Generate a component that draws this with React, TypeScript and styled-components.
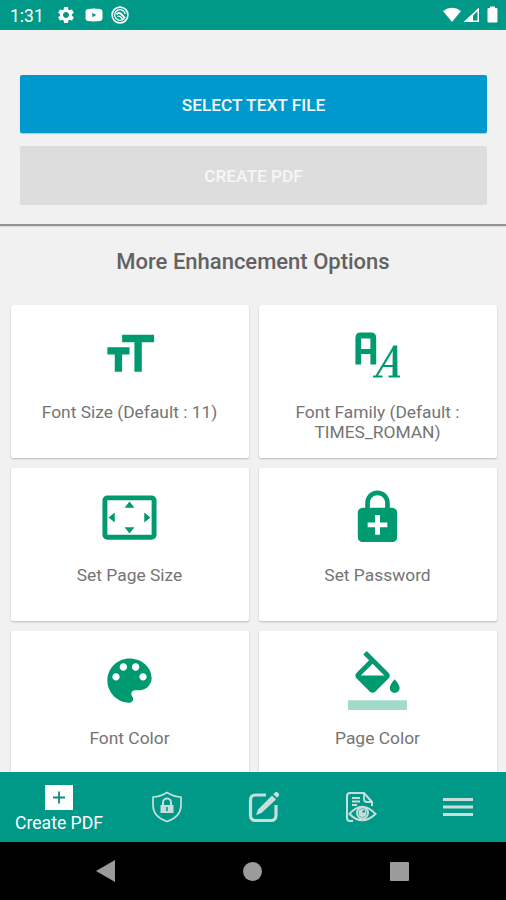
import React from "react";
import styled, { createGlobalStyle } from "styled-components";

const GlobalStyle = createGlobalStyle`
  * { box-sizing: border-box; }
  body { margin: 0; font-family: Roboto, "Liberation Sans", sans-serif; }
  svg { display: block; }
`;

const Screen = styled.div`
  width: 506px;
  height: 900px;
  display: flex;
  flex-direction: column;
  overflow: hidden;
  background: #f1f1f1;
`;

const StatusBar = styled.header`
  flex: 0 0 30px;
  min-height: 0;
  display: flex;
  align-items: center;
  padding: 0 8px 0 10px;
  background: #009887;
  color: #fff;
`;

const Clock = styled.span`
  width: 46px;
  font-size: 17.5px;
  line-height: 28px;
  padding-top: 2px;
`;

const StatusGroup = styled.div<{ $gap: number; $end?: boolean }>`
  display: flex;
  align-items: center;
  gap: ${(p) => p.$gap}px;
  margin-left: ${(p) => (p.$end ? "auto" : "0")};
`;

const Actions = styled.section`
  flex: 0 0 196px;
  display: flex;
  flex-direction: column;
  gap: 13px;
  padding: 44.5px 19px 0 20px;
  border-bottom: 2px solid #929492;
  box-shadow: 0 1px 1px #dcdcdc;
`;

const ActionButton = styled.button<{ $muted?: boolean }>`
  height: 58.5px;
  padding: 2px 0 0;
  border: 0;
  border-radius: 2px;
  background: ${(p) => (p.$muted ? "#dddddd" : "#0099ce")};
  color: ${(p) => (p.$muted ? "#f6f6f6" : "#f4fbfe")};
  box-shadow: ${(p) => (p.$muted ? "none" : "0 1px 1px #a9c8d5")};
  font: 500 17.3px Roboto, sans-serif;
`;

const Heading = styled.h2`
  flex: 0 0 79px;
  margin: 0;
  padding-top: 24px;
  text-align: center;
  color: #626262;
  font-size: 22px;
  font-weight: 500;
  line-height: 24px;
`;

const Options = styled.main`
  flex: 1 1 0;
  min-height: 0;
  overflow: hidden;
  display: grid;
  grid-template-columns: 238px 238px;
  grid-auto-rows: 153px;
  gap: 10px;
  padding: 0 10px 0 10.5px;
`;

const Card = styled.article`
  display: flex;
  flex-direction: column;
  align-items: center;
  padding-top: 20px;
  background: #fff;
  border-radius: 2px;
  box-shadow: 0 1px 2px rgba(0, 0, 0, 0.23);
  color: #009a70;
`;

const CardLabel = styled.p`
  margin: 17.500px 0 0;
  width: 190px;
  text-align: center;
  color: #747474;
  font-size: 17.4px;
  line-height: 20.5px;
  white-space: pre-line;
`;

const TabBar = styled.nav`
  flex: 0 0 70px;
  display: grid;
  grid-template-columns: 118px 98px 96px 98px 96px;
  background: #009887;
  color: #c9dedb;
`;

const Tab = styled.div<{ $active?: boolean }>`
  display: flex;
  flex-direction: column;
  align-items: center;
  justify-content: ${(p) => (p.$active ? "flex-start" : "center")};
  padding-top: ${(p) => (p.$active ? 12.5 : 0)}px;
  color: ${(p) => (p.$active ? "#fff" : "inherit")};
`;

const TabLabel = styled.span`
  margin-top: 3.500px;
  font-size: 17.6px;
  line-height: 21px;
`;

const SystemBar = styled.footer`
  flex: 0 0 58px;
  display: flex;
  align-items: center;
  justify-content: space-between;
  padding: 0 97px 0 96px;
  background: #000;
  color: #9b9b9b;
`;

const MaterialIcon = ({ d, size = 59, children }: { d: string; size?: number; children?: React.ReactNode }) => (
  <svg width={size} height={size} viewBox="0 0 24 24" fill="currentColor">
    <path d={d} />
    {children}
  </svg>
);

const FontFamilyIcon = () => (
  <svg width="59" height="59" viewBox="0 0 59 59" fill="none" stroke="currentColor">
    <path d="M10.300 39.500V13q0-2.500 2.500-2.500h10q2.500 0 2.500 2.500v26.500" strokeWidth="5.800" />
    <path d="M11 26.500h14" strokeWidth="5" />
    <path d="M25 51.500h9.500M40.500 51.500h11.500" strokeWidth="2.200" />
    <path d="M28.500 51 46 22M34.500 41h12" strokeWidth="2.200" />
    <path d="M44.800 20.500h4.400L49.500 51.500h-5l.2-25z" fill="currentColor" stroke="none" />
  </svg>
);

const icons = {
  size: "M9 4v3h5v12h3V7h5V4H9zm-6 8h3v7h3v-7h3V9H3v3z",
  page: "M12.01 5.5L10 8h4l-1.99-2.5zM18 10v4l2.5-1.99L18 10zM6 10l-2.5 2.01L6 14v-4zm8 6h-4l2.01 2.5L14 16zm7-13H3c-1.1 0-2 .9-2 2v14c0 1.1.9 2 2 2h18c1.1 0 2-.9 2-2V5c0-1.1-.9-2-2-2zm0 16.01H3V4.99h18v14.02z",
  lock: "M18 8h-1V6c0-2.76-2.24-5-5-5S7 3.24 7 6v2H6c-1.1 0-2 .9-2 2v10c0 1.1.9 2 2 2h12c1.1 0 2-.9 2-2V10c0-1.1-.9-2-2-2zM8.900 6c0-1.71 1.39-3.1 3.1-3.1s3.1 1.39 3.1 3.1v2H8.900V6zM16 16h-3v3h-2v-3H8v-2h3v-3h2v3h3v2z",
  palette: "M12 3c-4.97 0-9 4.03-9 9s4.03 9 9 9c.83 0 1.5-.67 1.5-1.5 0-.39-.15-.74-.39-1.01-.23-.26-.38-.61-.38-.99 0-.83.67-1.5 1.5-1.5H16c2.76 0 5-2.24 5-5 0-4.42-4.03-8-9-8zm-5.5 9c-.83 0-1.5-.67-1.5-1.5S5.67 9 6.5 9 8 9.67 8 10.5 7.33 12 6.5 12zm3-4C8.67 8 8 7.33 8 6.5S8.67 5 9.5 5s1.5.67 1.5 1.5S10.33 8 9.5 8zm5 0c-.83 0-1.5-.67-1.5-1.5S13.67 5 14.5 5s1.5.67 1.5 1.5S15.33 8 14.5 8zm3 4c-.83 0-1.5-.67-1.5-1.5S16.67 9 17.5 9s1.5.67 1.5 1.5-.67 1.5-1.5 1.5z",
  fill: "M16.56 8.94L7.62 0 6.21 1.41l2.38 2.38-5.15 5.15c-.59.59-.59 1.54 0 2.12l5.5 5.5c.29.29.68.44 1.06.44s.77-.15 1.06-.44l5.5-5.5c.59-.58.59-1.53 0-2.12zM5.21 10L10 5.21 14.79 10H5.21zM19 11.5s-2 2.17-2 3.5c0 1.1.9 2 2 2s2-.9 2-2c0-1.33-2-3.5-2-3.5z",
  gear: "M19.14 12.94c.04-.3.06-.61.06-.94 0-.32-.02-.64-.07-.94l2.03-1.58c.18-.14.23-.41.12-.61l-1.92-3.32c-.12-.22-.37-.29-.59-.22l-2.39.96c-.5-.38-1.03-.7-1.62-.94l-.36-2.54c-.04-.24-.24-.41-.48-.41h-3.84c-.24 0-.43.17-.47.41l-.36 2.54c-.59.24-1.13.57-1.62.94l-2.39-.96c-.22-.08-.47 0-.59.22L2.74 8.87c-.12.21-.08.47.12.61l2.03 1.58c-.05.3-.09.63-.09.94s.02.64.07.94l-2.03 1.58c-.18.14-.23.41-.12.61l1.92 3.32c.12.22.37.29.59.22l2.39-.96c.5.38 1.03.7 1.62.94l.36 2.54c.05.24.24.41.48.41h3.84c.24 0 .44-.17.47-.41l.36-2.54c.59-.24 1.13-.56 1.62-.94l2.39.96c.22.08.47 0 .59-.22l1.92-3.32c.12-.22.07-.47-.12-.61l-2.01-1.58zM12 15.6c-1.98 0-3.6-1.62-3.6-3.6s1.62-3.6 3.6-3.6 3.6 1.62 3.6 3.6-1.62 3.6-3.6 3.6z",
};

const options = [
  { label: "Font Size (Default : 11)", icon: <MaterialIcon d={icons.size} /> },
  { label: "Font Family (Default :\nTIMES_ROMAN)", icon: <FontFamilyIcon /> },
  { label: "Set Page Size", icon: <MaterialIcon d={icons.page} /> },
  { label: "Set Password", icon: <MaterialIcon d={icons.lock} /> },
  { label: "Font Color", icon: <MaterialIcon d={icons.palette} /> },
  {
    label: "Page Color",
    icon: (
      <MaterialIcon d={icons.fill}>
        <path d="M0 20h24v4H0z" opacity="0.36" />
      </MaterialIcon>
    ),
  },
];

export default function App() {
  return (
    <Screen>
      <GlobalStyle />
      <StatusBar>
        <Clock>1:31</Clock>
        <StatusGroup $gap={8.5}>
          <MaterialIcon d={icons.gear} size={20} />
          <svg width="18" height="14" viewBox="0 0 18 14">
            <path d="M3 1Q9 .2 15 1q2.5.2 2.5 2.500v7q0 2.300-2.500 2.500-6 .8-12 0Q.5 12.800.5 10.500v-7Q.5 1.200 3 1zM7.300 4.800v4.400l4-2.200z" fill="#fff" fillRule="evenodd" />
          </svg>
          <svg width="18" height="18" viewBox="0 0 18 18" fill="none" stroke="#fff">
            <circle cx="9" cy="9" r="7.900" strokeWidth="1.600" />
            <path d="M13 12.500A5.300 5.300 0 1 1 14.200 8" strokeWidth="1.300" />
            <path d="M5.500 8.200Q8.500 5.200 11.500 9.500L14 12.300" strokeWidth="2" />
            <path d="M6.500 10.500Q8.500 9 11.500 13" strokeWidth="1.200" />
          </svg>
        </StatusGroup>
        <StatusGroup $gap={1} $end>
          <svg width="20" height="18" viewBox="0 0 20 18">
            <path d="M1 5Q10-1.500 19 5L10 16z" fill="#fff" />
          </svg>
          <svg width="23" height="18" viewBox="0 0 23 18">
            <path d="M16 1.500v14.500H.5zM14.500 5 10 9.800v4.700h4.500z" fill="#fff" fillRule="evenodd" />
          </svg>
          <svg width="11" height="18" viewBox="0 0 11 18">
            <path d="M3 .5h5v1.500h1.500q1 0 1 1V15.500q0 1-1 1h-8q-1 0-1-1V3q0-1 1-1H3z" fill="#fff" />
          </svg>
        </StatusGroup>
      </StatusBar>

      <Actions>
        <ActionButton>SELECT TEXT FILE</ActionButton>
        <ActionButton $muted>CREATE PDF</ActionButton>
      </Actions>

      <Heading>More Enhancement Options</Heading>

      <Options>
        {options.map((option) => (
          <Card key={option.label}>
            {option.icon}
            <CardLabel>{option.label}</CardLabel>
          </Card>
        ))}
      </Options>

      <TabBar>
        <Tab $active>
          <svg width="28" height="25" viewBox="0 0 28 25">
            <path d="M0 0h28v25H0z" fill="#fff" />
            <path d="M14 6.500v12M8 12.500h12" stroke="#16877c" strokeWidth="1.800" />
          </svg>
          <TabLabel>Create PDF</TabLabel>
        </Tab>
        <Tab>
          <svg width="32" height="32" viewBox="0 0 32 32" fill="none" stroke="currentColor">
            <path d="M16 1.500Q22 5.500 30 6v9Q29.500 26 16 30.500 2.500 26 2 15V6Q10 5.500 16 1.500z" strokeWidth="1.700" strokeLinejoin="round" />
            <path d="M12 14v-2.500a4 4 0 0 1 8 0V14" strokeWidth="2" />
            <path d="M9.500 14h13v8h-13zM15.200 16v4h1.600v-4z" fill="currentColor" fillRule="evenodd" stroke="none" />
          </svg>
        </Tab>
        <Tab>
          <svg width="32" height="32" viewBox="0 0 32 32">
            <path d="M18 4H7.500Q2.500 4 2.500 9v15.500q0 5 5 5h15.500q5 0 5-5V14" fill="none" stroke="currentColor" strokeWidth="3.200" />
            <path d="m24 4.500 4 4L13.500 22 8 24l2-5.500zM25.300 3.300l2-2q1-1 2 0l1.500 1.500q1 1 0 2l-1.800 2z" fill="currentColor" />
          </svg>
        </Tab>
        <Tab>
          <svg width="32" height="32" viewBox="0 0 32 32" fill="none" stroke="currentColor">
            <path d="M8 30H5q-3 0-3-3V5q0-3 3-3h14l8 9v4" strokeWidth="2" />
            <path d="M19 2v6q0 3 3 3h5M7 7h8M7 10.500h8M7 14h5" strokeWidth="1.800" />
            <path d="M4.500 23Q17 8.500 30.500 23 17 35.500 4.500 23z" fill="#009887" strokeWidth="2" />
            <circle cx="17.500" cy="22" r="5.500" strokeWidth="2" />
            <circle cx="17.500" cy="22" r="4" fill="currentColor" stroke="none" />
            <circle cx="18.700" cy="20.500" r="1.300" fill="#009887" stroke="none" />
          </svg>
        </Tab>
        <Tab>
          <svg width="32" height="32" viewBox="0 0 32 32">
            <path d="M1 8.500h30M1 16h30M1 23.500h30" stroke="currentColor" strokeWidth="3" />
          </svg>
        </Tab>
      </TabBar>

      <SystemBar>
        <svg width="19" height="22" viewBox="0 0 19 22"><path d="M19 0v22L0 11z" fill="currentColor" /></svg>
        <svg width="19" height="19" viewBox="0 0 19 19"><circle cx="9.500" cy="9.500" r="9.500" fill="currentColor" /></svg>
        <svg width="19" height="19" viewBox="0 0 19 19"><rect width="19" height="19" rx="1" fill="currentColor" /></svg>
      </SystemBar>
    </Screen>
  );
}
